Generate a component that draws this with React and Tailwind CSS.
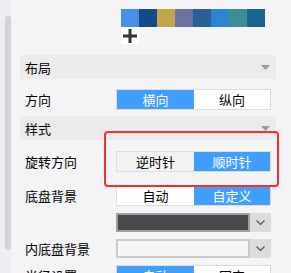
import React from "react";

const swatches = ["#4a90e2", "#154a8a", "#c0a74e", "#6e72a0", "#2e5e98", "#2d85d0", "#3e8c94", "#1b6490"];

function Arrow() {
  return (
    <svg width="9" height="5" viewBox="0 0 9 5" className="mr-[6px]">
      <path d="M0 0 H9 L4.5 5 Z" fill="#9a9a9a" />
    </svg>
  );
}

function Header({ title, mt }) {
  return (
    <div className={`flex h-[24px] w-[256px] shrink-0 items-center justify-between bg-[#ebebeb] pl-[5px] ${mt}`}>
      <span>{title}</span>
      <Arrow />
    </div>
  );
}

function Seg({ a, b, active, leftBg = "bg-white" }) {
  return (
    <div className="flex h-[21px] w-[155px] border border-[#dcdcdc]">
      <div className={`flex w-[77px] items-center justify-center ${active === 0 ? "bg-[#409eff] text-white" : `${leftBg} text-black`}`}>{a}</div>
      <div className={`flex flex-1 items-center justify-center ${active === 1 ? "bg-[#409eff] text-white" : "bg-white text-black"}`}>{b}</div>
    </div>
  );
}

function Row({ label, children, mt }) {
  return (
    <div className={`flex w-[256px] shrink-0 items-center ${mt}`}>
      <div className="w-[96px] pl-[5px]">{label}</div>
      {children}
    </div>
  );
}

function Select({ dark }) {
  return (
    <div className="flex h-[19px] w-[155px]">
      <div className={`h-full w-[134px] border-2 ${dark ? "border-[#a0a0a0] bg-[#48484d]" : "border-[#cacaca] bg-[#f5f5f5]"}`} />
      <div className="flex flex-1 items-center justify-center bg-[#dcdcdc]">
        <svg width="9" height="5" viewBox="0 0 9 5">
          <path d="M0.5 0.5 L4.5 4.5 L8.5 0.5" fill="none" stroke="#555" strokeWidth="1.2" />
        </svg>
      </div>
    </div>
  );
}

export default function App() {
  return (
    <div className="relative flex h-[273px] w-[291px] items-start overflow-hidden bg-[#f4f4f6] text-[13px] leading-none text-black" style={{ fontFamily: '"Noto Sans CJK SC", "Noto Sans", sans-serif' }}>
      <div className="flex h-full w-[11px] shrink-0 bg-[#eeeef2] pl-[5px] pt-[16px]">
        <div className="h-[234px] w-[6px] rounded-[3px] bg-[#d4d4d6]" />
      </div>
      <div className="flex shrink-0 flex-col pl-[9px] pt-[9px]">
        <div className="ml-[101px] flex shrink-0">
          {swatches.map((c) => (
            <div key={c} className="h-[18px] w-[18px]" style={{ backgroundColor: c }} />
          ))}
        </div>
        <div className="ml-[101px] flex h-[17px] w-[18px] shrink-0 items-center justify-center bg-white">
          <svg width="14" height="14" viewBox="0 0 14 14">
            <path d="M7 0 V14 M0 7 H14" stroke="#333" strokeWidth="3" />
          </svg>
        </div>
        <Header title="布局" mt="mt-[11px]" />
        <Row label="方向" mt="mt-[10px]">
          <Seg a="横向" b="纵向" active={0} />
        </Row>
        <Header title="样式" mt="mt-[6px]" />
        <Row label="旋转方向" mt="mt-[11px]">
          <Seg a="逆时针" b="顺时针" active={1} leftBg="bg-[#f2f2f2]" />
        </Row>
        <Row label="底盘背景" mt="mt-[13px]">
          <Seg a="自动" b="自定义" active={1} />
        </Row>
        <Row label="" mt="mt-[7px]">
          <Select dark />
        </Row>
        <Row label="内底盘背景" mt="mt-[7px]">
          <Select />
        </Row>
        <Row label="半径设置" mt="mt-[7px]">
          <Seg a="自动" b="固定" active={0} />
        </Row>
      </div>
      <div className="absolute left-[104px] top-[131px] h-[56px] w-[175px] rounded-[4px] border-2 border-[#ff2a2a]" />
    </div>
  );
}
